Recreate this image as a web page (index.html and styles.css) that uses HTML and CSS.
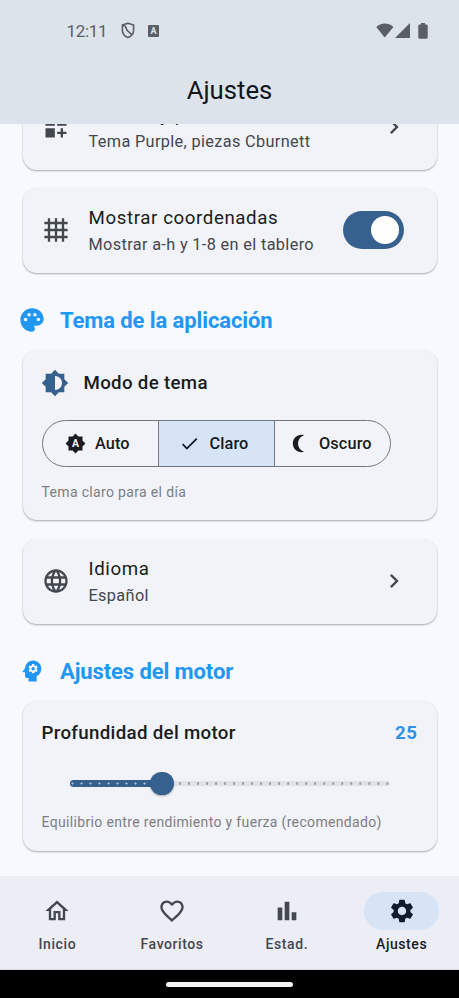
FILE: index.html
```html
<!DOCTYPE html>
<html lang="es">
<head>
<meta charset="utf-8">
<title>Ajustes</title>
<link rel="stylesheet" href="styles.css">
</head>
<body>
<div class="screen">
  <header class="top">
    <div class="status">
      <span class="clock">12:11</span>
      <svg class="shield" viewBox="0 0 14 17"><path d="M7 1.200 12.600 3v5.200c0 3.500-2.300 6-5.600 7.400C3.700 14.200 1.400 11.700 1.400 8.200V3z M2 3.500C5 3.500 5 5 5.500 7.200S8 9 10.600 13" fill="none" stroke="currentColor" stroke-width="1.600"/></svg>
      <span class="abox">A</span>
      <svg class="wifi" viewBox="0 0 18 15"><path d="M9 15 .2 4.200C5-.7 13-.7 17.800 4.200z"/></svg>
      <svg class="signal" viewBox="0 0 15 15"><path d="M15 0v15H0z"/></svg>
      <svg class="battery" viewBox="0 0 10 16"><path d="M3 0h4v1.500h1.500q1.200 0 1.200 1.200V14.500q0 1.200-1.200 1.200h-7Q.3 15.700.3 14.500V2.700q0-1.200 1.200-1.200H3z"/></svg>
    </div>
    <h1>Ajustes</h1>
  </header>

  <main>
    <section class="card row board">
      <svg class="ic" viewBox="0 0 24 24"><path d="M3 3h8v8H3zm10 0h8v8h-8zM3 13h8v8H3zm15 0h-2v3h-3v2h3v3h2v-3h3v-2h-3z"/></svg>
      <div class="txt"><div class="t">Tablero y piezas</div><div class="s">Tema Purple, piezas Cburnett</div></div>
      <svg class="ic chev" viewBox="0 0 24 24"><path d="M10 6L8.590 7.410 13.170 12l-4.580 4.590L10 18l6-6z"/></svg>
    </section>

    <section class="card row">
      <svg class="ic" viewBox="0 0 24 24"><path d="M22 7V5h-3V2h-2v3h-4V2h-2v3H7V2H5v3H2v2h3v4H2v2h3v4H2v2h3v3h2v-3h4v3h2v-3h4v3h2v-3h3v-2h-3v-4h3v-2h-3V7h3zM7 7h4v4H7V7zm0 10v-4h4v4H7zm10 0h-4v-4h4v4zm0-6h-4V7h4v4z"/></svg>
      <div class="txt"><div class="t">Mostrar coordenadas</div><div class="s">Mostrar a-h y 1-8 en el tablero</div></div>
      <div class="switch"><i></i></div>
    </section>

    <h2>
      <svg class="ic" viewBox="0 0 24 24"><path d="M12 2C6.490 2 2 6.490 2 12s4.490 10 10 10c1.380 0 2.500-1.120 2.500-2.500 0-.61-.23-1.200-.64-1.670-.08-.1-.13-.21-.13-.33 0-.28.22-.5.5-.5H16c3.310 0 6-2.690 6-6 0-4.960-4.490-9-10-9zm5.500 11c-.83 0-1.500-.67-1.500-1.500s.67-1.500 1.500-1.500 1.500.67 1.500 1.500-.67 1.500-1.500 1.500zm-3-4c-.83 0-1.500-.67-1.500-1.500S13.670 6 14.500 6s1.500.67 1.500 1.500S15.330 9 14.500 9zM5 11.500C5 10.670 5.670 10 6.500 10s1.500.67 1.500 1.500S7.330 13 6.500 13 5 12.330 5 11.500zm6-4c0 .83-.67 1.500-1.500 1.500S8 8.330 8 7.500 8.670 6 9.500 6s1.500.67 1.500 1.500z"/></svg>
      <span>Tema de la aplicación</span>
    </h2>

    <section class="card theme">
      <div class="mode">
        <svg class="ic" viewBox="0 0 24 24"><path d="M20 15.310L23.310 12 20 8.690V4h-4.690L12 .69 8.690 4H4v4.690L.69 12 4 15.310V20h4.690L12 23.310 15.310 20H20v-4.690zM12 18V6c3.310 0 6 2.690 6 6s-2.690 6-6 6z"/></svg>
        <span>Modo de tema</span>
      </div>
      <div class="seg">
        <div class="opt auto">
          <svg viewBox="0 0 24 24"><path d="M20 8.690V4h-4.690L12 .69 8.690 4H4v4.690L.69 12 4 15.310V20h4.690L12 23.310 15.310 20H20v-4.690L23.310 12z"/><text x="12" y="16.200" text-anchor="middle">A</text></svg>
          <span>Auto</span>
        </div>
        <div class="opt on">
          <svg viewBox="0 0 24 24"><path d="M9 16.170L4.830 12l-1.420 1.410L9 19 21 7l-1.410-1.410z"/></svg>
          <span>Claro</span>
        </div>
        <div class="opt dark">
          <svg viewBox="0 0 24 24"><path d="M15.500 22c1.050 0 2.050-.16 3-.46-4.060-1.270-7-5.060-7-9.540s2.940-8.270 7-9.540c-.95-.3-1.950-.46-3-.46-5.520 0-10 4.480-10 10s4.480 10 10 10z"/></svg>
          <span>Oscuro</span>
        </div>
      </div>
      <p class="hint">Tema claro para el día</p>
    </section>

    <section class="card row">
      <svg class="ic" viewBox="0 0 24 24"><path d="M11.990 2C6.470 2 2 6.480 2 12s4.470 10 9.990 10C17.520 22 22 17.520 22 12S17.520 2 11.990 2zm6.930 6h-2.950c-.32-1.250-.78-2.450-1.380-3.560 1.840.63 3.370 1.910 4.330 3.560zM12 4.040c.83 1.200 1.480 2.530 1.910 3.960h-3.820c.43-1.430 1.080-2.760 1.910-3.960zM4.260 14C4.100 13.360 4 12.690 4 12s.1-1.360.26-2h3.380c-.08.66-.14 1.320-.14 2s.06 1.340.14 2H4.260zm.82 2h2.950c.32 1.250.78 2.450 1.380 3.560-1.840-.63-3.370-1.900-4.330-3.560zm2.950-8H5.080c.96-1.660 2.490-2.930 4.330-3.560C8.810 5.550 8.350 6.750 8.030 8zM12 19.960c-.83-1.200-1.480-2.530-1.910-3.960h3.820c-.43 1.430-1.080 2.760-1.910 3.960zM14.340 14H9.660c-.09-.66-.16-1.320-.16-2s.07-1.350.16-2h4.680c.09.65.16 1.320.16 2s-.07 1.340-.16 2zm.25 5.560c.6-1.110 1.060-2.310 1.380-3.560h2.950c-.96 1.650-2.490 2.930-4.330 3.560zM16.360 14c.08-.66.14-1.320.14-2s-.06-1.340-.14-2h3.380c.16.64.26 1.310.26 2s-.1 1.360-.26 2h-3.380z"/></svg>
      <div class="txt"><div class="t">Idioma</div><div class="s">Español</div></div>
      <svg class="ic chev" viewBox="0 0 24 24"><path d="M10 6L8.590 7.410 13.170 12l-4.580 4.590L10 18l6-6z"/></svg>
    </section>

    <h2>
      <svg class="ic" viewBox="0 0 24 24"><path d="M13 8.570c-.79 0-1.430.64-1.430 1.430s.64 1.430 1.430 1.430 1.430-.64 1.430-1.430-.64-1.430-1.430-1.430z"/><path fill-rule="evenodd" d="M13 3C9.250 3 6.200 5.940 6.020 9.640L4.100 12.200c-.25.33-.01.8.4.8H6v3c0 1.100.9 2 2 2h1v3h7v-4.680c2.360-1.120 4-3.530 4-6.320 0-3.870-3.130-7-7-7zm3 7c0 .13-.01.26-.02.39l.83.66c.08.06.1.16.05.25l-.8 1.390c-.05.09-.16.12-.24.09l-.99-.4c-.21.16-.43.29-.67.39L14 13.830c-.01.1-.1.17-.2.17h-1.600c-.1 0-.18-.07-.2-.17l-.15-1.060c-.25-.1-.47-.23-.68-.39l-.99.4c-.09.03-.2 0-.25-.09l-.8-1.390c-.05-.08-.03-.19.05-.25l.84-.66c-.01-.13-.02-.26-.02-.39s.02-.27.04-.39l-.85-.66c-.08-.06-.1-.16-.05-.26l.8-1.380c.05-.09.15-.12.24-.09l1 .4c.2-.15.43-.29.67-.39L12 6.170c.02-.1.1-.17.2-.17h1.600c.1 0 .18.07.2.17l.15 1.060c.24.1.46.23.67.39l1-.4c.09-.03.2 0 .24.09l.8 1.380c.05.09.03.2-.05.26l-.85.66c.03.12.04.25.04.39z"/></svg>
      <span>Ajustes del motor</span>
    </h2>

    <section class="card engine">
      <div class="depth"><span>Profundidad del motor</span><b>25</b></div>
      <div class="slider"><i class="done"></i><i class="thumb"></i><i class="rest"></i></div>
      <p class="hint">Equilibrio entre rendimiento y fuerza (recomendado)</p>
    </section>
  </main>

  <nav>
    <a><span class="pill"><svg class="ic" viewBox="0 0 24 24"><path d="M12 5.690l5 4.500V18h-2v-6H9v6H7v-7.810l5-4.500M12 3L2 12h3v8h6v-6h2v6h6v-8h3L12 3z"/></svg></span>Inicio</a>
    <a><span class="pill"><svg class="ic" viewBox="0 0 24 24"><path d="M16.500 3c-1.740 0-3.410.81-4.500 2.090C10.910 3.810 9.240 3 7.500 3 4.420 3 2 5.420 2 8.500c0 3.780 3.400 6.860 8.550 11.540L12 21.350l1.450-1.320C18.600 15.360 22 12.280 22 8.500 22 5.420 19.580 3 16.500 3zm-4.400 15.550l-.1.1-.1-.1C7.140 14.240 4 11.390 4 8.500 4 6.500 5.500 5 7.500 5c1.540 0 3.040.99 3.570 2.360h1.870C13.460 5.990 14.960 5 16.500 5c2 0 3.500 1.500 3.500 3.500 0 2.890-3.140 5.740-7.900 10.050z"/></svg></span>Favoritos</a>
    <a><span class="pill"><svg class="ic" viewBox="0 0 24 24"><path d="M4 9h4v11H4zm12 4h4v7h-4zm-6-9h4v16h-4z"/></svg></span>Estad.</a>
    <a class="on"><span class="pill"><svg class="ic" viewBox="0 0 24 24"><path d="M19.140 12.940c.04-.3.06-.61.06-.94 0-.32-.02-.64-.07-.94l2.030-1.580c.18-.14.23-.41.12-.61l-1.920-3.320c-.12-.22-.37-.29-.59-.22l-2.390.96c-.5-.38-1.030-.7-1.620-.94l-.36-2.540c-.04-.24-.24-.41-.48-.41h-3.840c-.24 0-.43.17-.47.41l-.36 2.540c-.59.24-1.130.57-1.620.94l-2.390-.96c-.22-.08-.47 0-.59.22L2.740 8.870c-.12.21-.08.47.12.61l2.030 1.580c-.05.3-.09.63-.09.94s.02.64.07.94l-2.030 1.580c-.18.14-.23.41-.12.61l1.920 3.320c.12.22.37.29.59.22l2.390-.96c.5.38 1.030.7 1.620.94l.36 2.540c.05.24.24.41.48.41h3.840c.24 0 .44-.17.47-.41l.36-2.540c.59-.24 1.130-.56 1.620-.94l2.390.96c.22.08.47 0 .59-.22l1.920-3.320c.12-.22.07-.47-.12-.61l-2.010-1.580zM12 15.600c-1.980 0-3.600-1.620-3.600-3.600s1.620-3.600 3.600-3.600 3.600 1.620 3.600 3.600-1.620 3.600-3.600 3.600z"/></svg></span>Ajustes</a>
  </nav>
  <footer><i></i></footer>
</div>
</body>
</html>
```
FILE: styles.css
```css
* { box-sizing: border-box; }
body { margin: 0; background: #f8f9ff; font-family: Roboto, sans-serif; color: #191c20; }
h1, h2, p { margin: 0; font-weight: 400; }
svg { display: block; fill: currentColor; flex: none; }
i { display: block; flex: none; }
.screen { width: 459px; height: 998px; display: flex; flex-direction: column; overflow: hidden; white-space: nowrap; }

.top { flex: none; height: 123.500px; background: #dde3eb; padding-top: 15.500px; }
.status { height: 30px; display: flex; align-items: center; padding: 0 31.500px 0 66.500px; color: #5a5e65; }
.clock { width: 54px; font-size: 17px; letter-spacing: -0.35px; }
.shield { width: 14px; height: 17px; }
.abox { width: 11px; height: 12px; margin-left: 13.500px; border-radius: 1px; background: #5a5e65; color: #dde3eb; font-size: 9px; font-weight: 700; line-height: 12px; text-align: center; }
.wifi { width: 17.500px; height: 14.500px; margin-left: auto; }
.signal { width: 15px; height: 15px; margin-left: 2px; }
.battery { width: 10px; height: 16px; margin-left: 7.500px; }
h1 { font-size: 25.700px; line-height: 30px; margin-top: 29.500px; text-align: center; color: #11151c; }

main { flex: none; height: 752.500px; overflow: hidden; padding: 0 22.500px; }
.card { background: #f1f3f8; border-radius: 14px; box-shadow: 0 1px 2px rgba(0,0,0,.26), 0 1px 2px rgba(0,0,0,.08); }
.ic { width: 28px; height: 28px; }
.row { height: 85px; margin-bottom: 18px; display: flex; align-items: center; padding: 0 33px 0 19px; color: #43474e; }
.board { margin-top: -39px; }
.txt { flex: 1; margin-left: 19px; padding-top: 1px; }
.t { font-size: 18.700px; line-height: 28px; letter-spacing: .6px; color: #191c20; }
.s { font-size: 16.300px; line-height: 25px; letter-spacing: .35px; }
.row .chev { margin-right: -4.500px; }
.switch { width: 61px; height: 38px; border-radius: 19px; background: #36618e; display: flex; align-items: center; justify-content: flex-end; padding-right: 5px; }
.switch i { width: 28px; height: 28px; border-radius: 50%; background: #fff; }

h2 { height: 24px; margin: 35.500px 0 18px -4.500px; display: flex; align-items: center; color: #2196f3; font-size: 22px; font-weight: 700; letter-spacing: -0.1px; }
h2 span { margin-left: 14px; }

.theme { height: 170px; margin-bottom: 18.500px; padding: 18.500px 19px; }
.mode { height: 28px; display: flex; align-items: center; color: #36618e; }
.mode svg { margin-left: -.5px; }
.mode span { margin-left: 14.500px; padding-top: 1px; font-size: 18.700px; font-weight: 500; letter-spacing: .32px; color: #191c20; }
.seg { width: 349px; height: 47px; margin-top: 23.500px; border: 1px solid #73777f; border-radius: 24px; display: grid; grid-template-columns: 115px 116px 1fr; overflow: hidden; }
.opt { display: flex; align-items: center; font-size: 16.300px; font-weight: 500; letter-spacing: .12px; }
.opt + .opt { border-left: 1px solid #73777f; }
.opt svg { width: 21px; height: 21px; margin-left: 22px; }
.opt span { margin-left: 9.500px; }
.opt text { fill: #f1f3f8; font-size: 12px; font-weight: 700; }
.opt.on { background: #d6e4f6; color: #101c2b; }
.opt.on svg { margin-left: 20px; }
.opt.on span { margin-left: 10px; }
.opt.dark svg { margin-left: 13px; }
.opt.dark span { margin-left: 10.500px; }
.hint { font-size: 14px; line-height: 20px; letter-spacing: .34px; color: #7c7e83; }
.theme .hint { margin-top: 14.500px; }

.engine { height: 150px; padding: 18px 19px; }
.depth { height: 28px; display: flex; align-items: center; justify-content: space-between; font-size: 18.700px; font-weight: 500; letter-spacing: .32px; }
.depth b { font-weight: 700; color: #2f92e3; letter-spacing: .5px; }
.slider { height: 24px; margin: 24.500px 28px 0; display: flex; align-items: center; }
.done { width: 92px; height: 7px; margin-right: -11.500px; border-radius: 4px; background: radial-gradient(circle, #a9c4df .8px, transparent 1.300px) -2px 0 / 9px 7px, #36618e; }
.thumb { width: 23.500px; height: 23.500px; border-radius: 50%; background: #36618e; box-shadow: 0 1px 2px rgba(0,0,0,.3); z-index: 1; }
.rest { width: 216px; height: 5px; border-radius: 0 3px 3px 0; background: radial-gradient(circle, #96989c 1px, transparent 1.400px) 1.500px 0 / 9.020px 5px, #e0e2e8; }
.engine .hint { margin-top: 16.500px; }

nav { flex: none; height: 93.500px; background: #ecedf5; display: grid; grid-template-columns: repeat(4, 1fr); padding: 16px 0 0; border-bottom: 1px solid #d9dae0; }
nav a { display: flex; flex-direction: column; align-items: center; font-size: 14px; font-weight: 500; line-height: 20px; letter-spacing: .58px; color: #43474e; }
.pill { width: 75px; height: 38px; margin-bottom: 4px; border-radius: 19px; display: flex; align-items: center; justify-content: center; }
nav .on { color: #191c20; }
.on .pill { background: #d6e4f6; color: #101c2b; }
footer { flex: 1; background: #000; display: flex; justify-content: center; padding-top: 12px; }
footer i { width: 127px; height: 5px; border-radius: 3px; background: #f3f1f4; }
```
